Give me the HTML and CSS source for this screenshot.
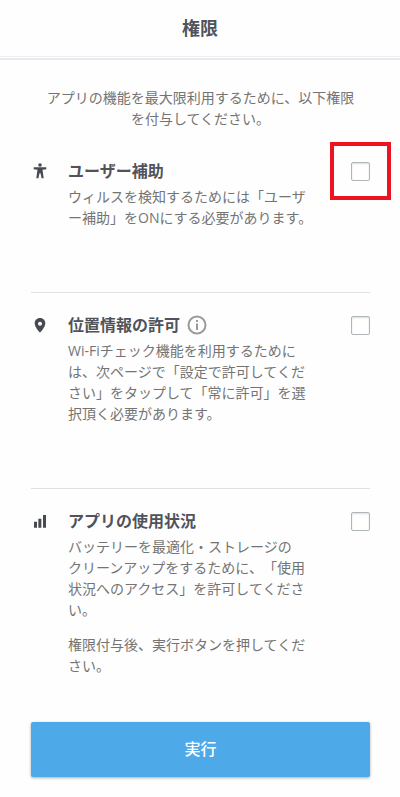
FILE: index.html
```html
<!DOCTYPE html>
<html lang="ja">
<head>
<meta charset="utf-8">
<meta name="viewport" content="width=device-width, initial-scale=1">
<title>権限</title>
<link rel="stylesheet" href="styles.css">
</head>
<body>
<header class="header"><h1 class="title">権限</h1></header>
<main class="main">
  <p class="intro">アプリの機能を最大限利用するために、以下権限を付与してください。</p>
  <form class="form">
    <section class="item">
      <svg class="icon" viewBox="0 0 24 24" aria-hidden="true"><circle cx="12" cy="3" r="2.700"/><path d="M2.500 6.500h19v2.900L15.800 10.300l1.700 12.700h-3.200l-1.500-7.500h-1.600L9.700 23H6.500l1.700-12.700-5.700-.9z"/></svg>
      <div class="body">
        <h2 class="name"><label for="accessibility">ユーザー補助</label></h2>
        <p class="text">ウィルスを検知するためには「ユーザー補助」をONにする必要があります。</p>
      </div>
      <div class="check highlight"><input class="box" type="checkbox" id="accessibility"></div>
    </section>
    <section class="item">
      <svg class="icon" viewBox="0 0 24 24" aria-hidden="true"><path fill-rule="evenodd" d="M12 1.500c-4.600 0-8 3.500-8 8C4 15.500 12 23.500 12 23.500s8-8 8-14c0-4.500-3.400-8-8-8zm0 5.500a3 3 0 1 1 0 6 3 3 0 0 1 0-6z"/></svg>
      <div class="body">
        <h2 class="name"><label for="location">位置情報の許可</label>
          <svg class="info" viewBox="0 0 20 20" aria-hidden="true"><circle cx="10" cy="10" r="8.500"/><path d="M10 8.500V15M10 5v2"/></svg>
        </h2>
        <p class="text">Wi-Fiチェック機能を利用するためには、次ページで「設定で許可してください」をタップして「常に許可」を選択頂く必要があります。</p>
      </div>
      <div class="check"><input class="box" type="checkbox" id="location"></div>
    </section>
    <section class="item">
      <svg class="icon" viewBox="0 0 24 24" aria-hidden="true"><path d="M3 13h4.500v9H3zM9.500 8.500H14V22H9.500zM16.500 3H21v19h-4.500z"/></svg>
      <div class="body">
        <h2 class="name"><label for="usage">アプリの使用状況</label></h2>
        <p class="text">バッテリーを最適化・ストレージの<br>クリーンアップをするために、「使用状況へのアクセス」を許可してください。</p>
        <p class="text">権限付与後、実行ボタンを押してください。</p>
      </div>
      <div class="check"><input class="box" type="checkbox" id="usage"></div>
    </section>
    <button class="submit" type="button">実行</button>
  </form>
</main>
</body>
</html>
```
FILE: styles.css
```css
* { box-sizing: border-box; }
body {
  margin: 0;
  background: #fefefe;
  color: #747474;
  font-family: "Open Sans", "Noto Sans CJK JP", sans-serif;
  font-size: 14px;
  font-weight: 400;
  line-height: 21px;
  text-spacing-trim: space-all;
}
h1, h2, p { margin: 0; }
.header {
  padding: 16px 0 18px;
  border-bottom: 2px solid #ebebed;
  box-shadow: inset 0 -1px #fefefe, inset 0 -2px #eceff3;
  text-align: center;
}
.title {
  color: #50535a;
  font-size: 18px;
  font-weight: 700;
  line-height: 24px;
}
.main { padding: 27px 30px 20px 31px; }
.intro { padding: 0 12px; text-align: center; }
.form { padding-top: 10px; }
.item {
  display: flex;
  align-items: flex-start;
  padding: 20px 0 64px;
  border-bottom: 1px solid #e1e1e1;
}
.item:last-of-type { padding-bottom: 46px; border-bottom: 0; }
.icon {
  flex: none;
  width: 16px;
  height: 16px;
  margin: 4px 20px 0 1px;
  fill: #474a51;
}
.body { flex: 1; max-width: 246px; }
.name {
  display: flex;
  align-items: center;
  gap: 7px;
  margin-bottom: 3px;
  color: #50535a;
  font-size: 16px;
  font-weight: 700;
  line-height: 24px;
}
.info {
  width: 20px;
  height: 20px;
  fill: none;
  stroke: #9a9a9a;
  stroke-width: 2;
}
.text { line-break: loose; }
.text + .text { margin-top: 14px; }
.check {
  position: relative;
  display: flex;
  margin: 3px 0 0 auto;
}
.box {
  appearance: none;
  width: 19px;
  height: 19px;
  margin: 0;
  border: 1px solid #afb6ba;
  border-radius: 2px;
  background: #fff;
  box-shadow: inset 0 1px 2px #ddd;
}
.box:checked { background: #4da9e8; }
.highlight::after {
  content: "";
  position: absolute;
  inset: -20px -21px -19px;
  border: 4px solid #ee1320;
  pointer-events: none;
}
.submit {
  display: block;
  width: 100%;
  padding: 15px;
  border: 0;
  border-radius: 2px;
  background: #4da9e8;
  box-shadow: 0 1px 3px #aaa;
  color: #fff;
  font: 500 16px/25px "Open Sans", "Noto Sans CJK JP", sans-serif;
}
```
